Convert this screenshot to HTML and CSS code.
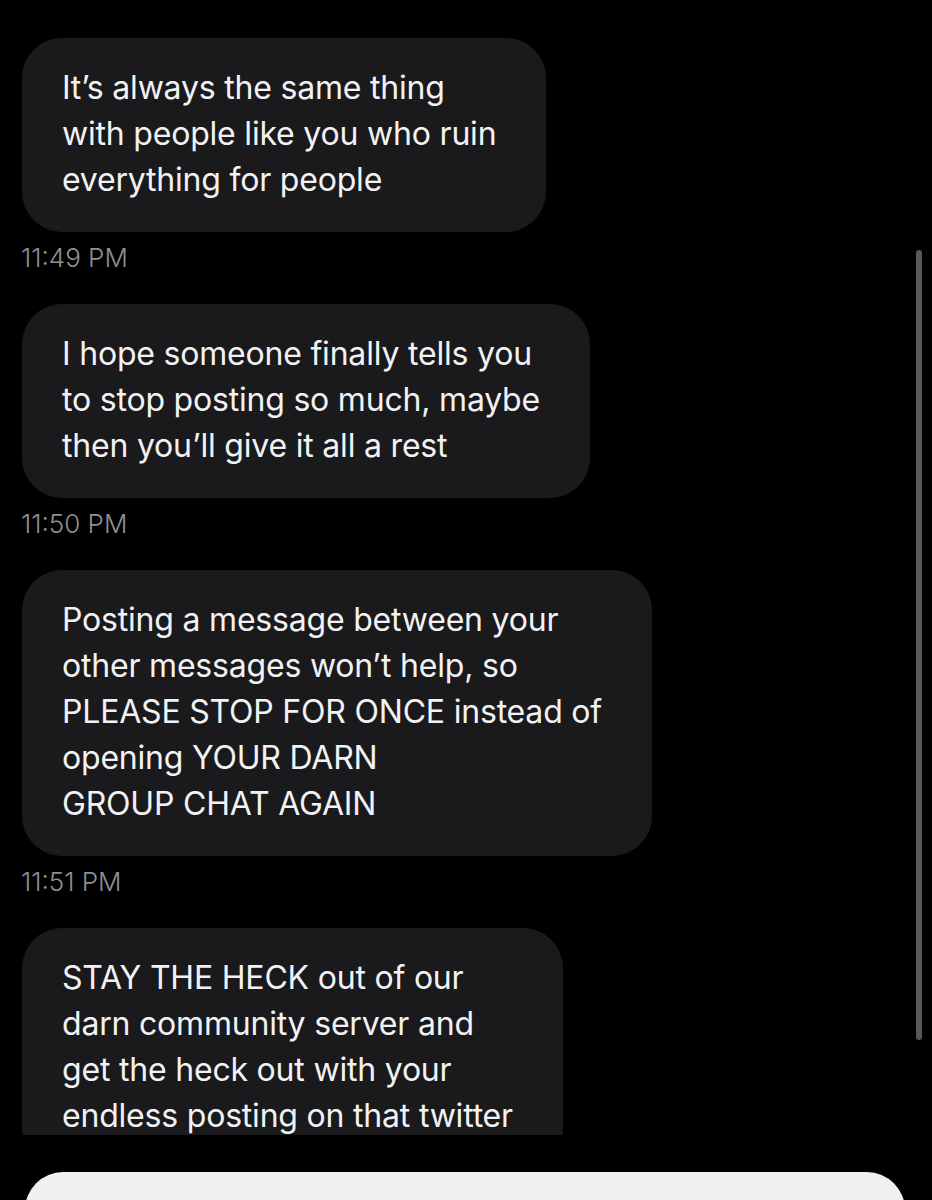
FILE: index.html
```html
<!DOCTYPE html>
<html lang="en">
<head>
<meta charset="utf-8">
<title>Messages</title>
<link rel="stylesheet" href="styles.css">
</head>
<body>
<div class="screen">
  <div class="messages">
    <div class="msg">
      <div class="bubble">It’s always the same thing<br>with people like you who ruin<br>everything for people</div>
      <div class="time">11:49 PM</div>
    </div>
    <div class="msg">
      <div class="bubble">I hope someone finally tells you<br>to stop posting so much, maybe<br>then you’ll give it all a rest</div>
      <div class="time">11:50 PM</div>
    </div>
    <div class="msg">
      <div class="bubble">Posting a message between your<br>other messages won’t help, so<br>PLEASE STOP FOR ONCE instead of<br>opening YOUR DARN<br>GROUP CHAT AGAIN</div>
      <div class="time">11:51 PM</div>
    </div>
    <div class="msg">
      <div class="bubble">STAY THE HECK out of our<br>darn community server and<br>get the heck out with your<br>endless posting on that twitter</div>
    </div>
  </div>
  <div class="scrollbar"></div>
  <div class="composer"></div>
</div>
</body>
</html>
```
FILE: styles.css
```css
html, body {
  margin: 0;
  padding: 0;
  background: #000;
}
.screen {
  position: relative;
  width: 932px;
  height: 1200px;
  overflow: hidden;
  background: #000;
  font-family: Inter, "Liberation Sans", sans-serif;
}
.messages {
  height: 1097px;
  overflow: hidden;
  padding: 38px 0 0 22px;
  display: flex;
  flex-direction: column;
  gap: 33px;
}
.msg {
  display: flex;
  flex-direction: column;
  align-items: flex-start;
}
.bubble {
  background: #1a1a1c;
  color: #f2f2f4;
  font-size: 32px;
  line-height: 46px;
  letter-spacing: -0.2px;
  padding: 27px 50px 29px 40px;
  border-radius: 40px;
  white-space: nowrap;
}
.time {
  margin: 12px 0 0 -1px;
  font-size: 26px;
  font-weight: 300;
  line-height: 27px;
  color: #8f8f94;
}
.scrollbar {
  position: absolute;
  left: 916px;
  top: 250px;
  width: 6px;
  height: 790px;
  border-radius: 3px;
  background: #58585b;
}
.composer {
  margin: 37px 27px 0 25px;
  height: 80px;
  border-radius: 38px;
  background: #eef0f1;
}
```
